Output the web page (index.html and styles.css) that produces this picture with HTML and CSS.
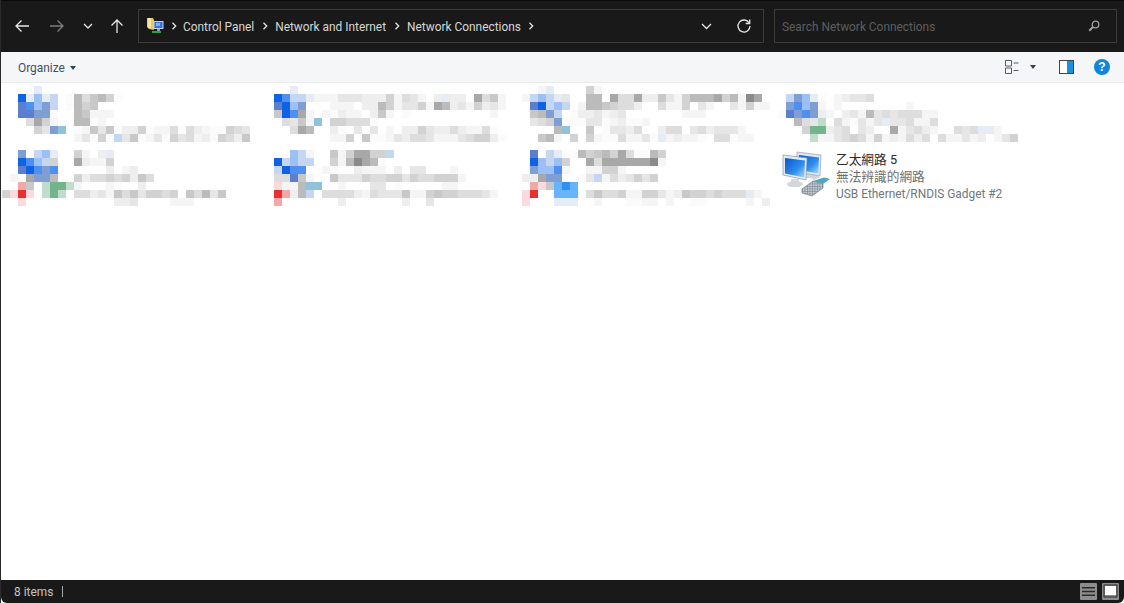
FILE: index.html
```html
<!DOCTYPE html>
<html lang="en">
<head>
<meta charset="utf-8">
<title>Network Connections</title>
<link rel="stylesheet" href="styles.css">
</head>
<body>
<div class="window">
  <header class="titlebar">
    <nav class="nav">
      <button class="nav-btn back" aria-label="Back"><svg width="16" height="14" viewBox="0 0 16 14"><path d="M15 7H2M7.500 1.500 2 7l5.500 5.500" class="line"/></svg></button>
      <button class="nav-btn forward" aria-label="Forward"><svg width="16" height="14" viewBox="0 0 16 14"><path d="M1 7h13M8.500 1.500 14 7l-5.500 5.500" class="line dim"/></svg></button>
      <button class="nav-btn recent" aria-label="Recent"><svg width="10" height="6" viewBox="0 0 10 6"><path d="M1 1l4 4 4-4" class="line"/></svg></button>
      <button class="nav-btn up" aria-label="Up"><svg width="14" height="16" viewBox="0 0 14 16"><path d="M7 15V2M1.500 7.500 7 2l5.500 5.500" class="line"/></svg></button>
    </nav>
    <div class="address">
      <svg class="cp-icon" width="17" height="16" viewBox="0 0 17 16">
        <path d="M0 0h6l1 2v10l-5-1-2-2z" fill="#e8c860"/>
        <path d="M1 0h3v10H1z" fill="#f6e6a0"/>
        <rect x="7" y="3.500" width="9" height="7" fill="#3f6fd8" stroke="#c0d0ee"/>
        <rect x="9" y="5" width="4" height="3" fill="#7fb0f0"/>
        <rect x="10" y="11" width="3" height="2" fill="#99a"/>
        <path d="M5 13h9v2H5z" fill="#2fa050"/>
      </svg>
      <span class="crumb-sep first"><svg width="6" height="8" viewBox="0 0 6 8"><path d="M1.500 .8 4.700 4 1.500 7.200" class="line"/></svg></span>
      <span class="crumb">Control Panel</span>
      <span class="crumb-sep"><svg width="6" height="8" viewBox="0 0 6 8"><path d="M1.500 .8 4.700 4 1.500 7.200" class="line"/></svg></span>
      <span class="crumb">Network and Internet</span>
      <span class="crumb-sep"><svg width="6" height="8" viewBox="0 0 6 8"><path d="M1.500 .8 4.700 4 1.500 7.200" class="line"/></svg></span>
      <span class="crumb">Network Connections</span>
      <span class="crumb-sep"><svg width="6" height="8" viewBox="0 0 6 8"><path d="M1.500 .8 4.700 4 1.500 7.200" class="line"/></svg></span>
      <span class="spacer"></span>
      <svg class="addr-down" width="11" height="7" viewBox="0 0 11 7"><path d="M1 1l4.500 4.500L10 1" class="line"/></svg>
      <svg class="refresh" width="16" height="16" viewBox="0 0 16 16"><path d="M13.200 5A6 6 0 1 0 14 8" class="line"/><path d="M13.700 1.500v4h-4" class="line"/></svg>
    </div>
    <div class="search">
      <span class="search-text">Search Network Connections</span>
      <svg width="12" height="12" viewBox="0 0 12 12"><circle cx="7.500" cy="4.500" r="3.300" class="line dimmer"/><path d="M5 7 1.200 10.800" class="line dimmer thick"/></svg>
    </div>
  </header>

  <div class="toolbar">
    <button class="organize">Organize<span class="caret"></span></button>
    <span class="spacer"></span>
    <svg class="views" width="14" height="14" viewBox="0 0 14 14"><path d="M.5 .5h6v5.500h-6zM.5 8h6v5.500h-6zM8.500 3h5M8.500 10.500h5" fill="none" stroke="#52606e"/></svg>
    <span class="caret views-caret"></span>
    <svg class="pane" width="15" height="14" viewBox="0 0 15 14"><rect x=".5" y=".5" width="14" height="13" fill="#fff" stroke="#3c4652"/><rect x="8" y="1" width="6" height="12" fill="#1b8fe0"/></svg>
    <span class="help">?</span>
  </div>

  <main class="content">
    <svg class="mosaic" data-cell="0" width="256" height="64"></svg>
    <svg class="mosaic" data-cell="1" width="256" height="64"></svg>
    <svg class="mosaic" data-cell="2" width="256" height="64"></svg>
    <svg class="mosaic" data-cell="3" width="256" height="64"></svg>
    <svg class="mosaic" data-cell="4" width="256" height="64"></svg>
    <svg class="mosaic" data-cell="5" width="256" height="64"></svg>
    <svg class="mosaic" data-cell="6" width="256" height="64"></svg>
    <div class="item">
      <svg class="net-icon" width="50" height="48" viewBox="0 0 50 48">
        <defs>
          <linearGradient id="scr" x1="0" y1="0" x2="1" y2="1">
            <stop offset="0" stop-color="#0b55d0"/>
            <stop offset=".6" stop-color="#2f8eec"/>
            <stop offset="1" stop-color="#a8dcfa"/>
          </linearGradient>
          <pattern id="mesh" width="2.500" height="2.500" patternUnits="userSpaceOnUse">
            <rect width="2.500" height="2.500" fill="#c2c9ce"/>
            <path d="M0 0h2.500M0 0v2.500" stroke="#66727c" stroke-width=".8"/>
          </pattern>
        </defs>
        <path d="M15 22l3 2v3h10l4 2 6-3-6-3z" fill="#cfd6dc"/>
        <path d="M15 1l24 3-1 21-23-4z" fill="#dfe7ee" stroke="#90a0b0" stroke-width=".7"/>
        <path d="M17 4l20 2.500-.7 16L17 19z" fill="url(#scr)"/>
        <path d="M9 28h8v3l4 2-4 3H8l-3-2 4-2z" fill="#d4dade"/>
        <ellipse cx="13" cy="33" rx="8" ry="3" fill="#d2d7db"/>
        <path d="M1 4l24 3-1 22L1 24z" fill="#e4ebf1" stroke="#8496a8" stroke-width=".7"/>
        <path d="M3 7l20 2.500-.8 17L3 22.500z" fill="url(#scr)"/>
        <path d="M20 38l11-8 10 3v4l-11 8-10-3z" fill="url(#mesh)" stroke="#77838c" stroke-width=".7"/>
        <path d="M31 30l11-3.500 6 1.500-7 5z" fill="#4fa6c2"/>
      </svg>
      <div class="item-text">
        <div class="item-name">乙太網路 5</div>
        <div class="item-status">無法辨識的網路</div>
        <div class="item-device">USB Ethernet/RNDIS Gadget #2</div>
      </div>
    </div>
  </main>

  <footer class="statusbar">
    <span class="count">8 items</span>
    <span class="status-sep"></span>
    <span class="spacer"></span>
    <svg class="status-icon" width="17" height="17" viewBox="0 0 17 17"><rect width="17" height="17" rx="1" fill="#8d8d8d"/><path d="M2 4h13v1.500H2zM2 7.700h13v1.500H2zM2 11.400h13v1.500H2z" fill="#2a2a2a"/></svg>
    <svg class="status-icon" width="17" height="17" viewBox="0 0 17 17"><rect width="17" height="17" rx="1" fill="#8d8d8d"/><rect x="3" y="3" width="11" height="9" fill="#fff"/><rect x="2" y="2" width="13" height="12" fill="none" stroke="#2a2a2a"/></svg>
  </footer>
</div>
<script src="mosaic.js"></script>
</body>
</html>
```

FILE: styles.css
```css
* { box-sizing: border-box; }
html, body { margin: 0; height: 100%; background: #fff; overflow: hidden; }
body { font: 11.9px Roboto, "Noto Sans CJK TC", sans-serif; }
.window {
  height: 603px;
  display: flex;
  flex-direction: column;
  border-left: 1px solid #2a2a2a;
  background: #fff;
}
.spacer { flex: 1; }
.line { fill: none; stroke: #e6e6e6; stroke-width: 1.300; }
.line.dim { stroke: #7d7d7d; }
.line.dimmer { stroke: #a0a0a0; }
.line.thick { stroke-width: 2; }

.titlebar {
  height: 52px;
  flex: none;
  background: #191919;
  display: flex;
  align-items: flex-start;
  padding-top: 8px;
  padding-right: 7px;
  border-top: 1px solid #0a0a0a;
}
.nav { width: 137px; height: 33px; flex: none; display: flex; align-items: center; }
.nav-btn { background: none; border: 0; padding: 0; display: flex; align-items: center; justify-content: center; height: 33px; }
.nav-btn.back { width: 42px; }
.nav-btn.forward { width: 27px; }
.nav-btn.recent { width: 35px; }
.nav-btn.up { width: 24px; }

.address, .search {
  height: 34px;
  border: 1px solid #3c3c3c;
  background: #191919;
  display: flex;
  align-items: center;
}
.address { width: 626px; flex: none; padding-left: 8px; color: #d6d6d6; }
.cp-icon { flex: none; }
.crumb { white-space: nowrap; line-height: 16px; padding-top: 2px; }
.crumb-sep { width: 21px; display: flex; justify-content: center; flex: none; }
.crumb-sep.first { width: 19px; }
.addr-down { margin-right: 24px; }
.refresh { margin-right: 11px; }
.search { flex: 1; margin-left: 10px; padding: 0 16px 0 7px; justify-content: space-between; color: #5e5e5e; }
.search-text { padding-top: 2px; }

.toolbar {
  height: 31px;
  flex: none;
  background: #f5f6f7;
  border-bottom: 1px solid #e9eaeb;
  display: flex;
  align-items: center;
  padding: 0 14px 0 17px;
}
.organize { background: none; border: 0; padding: 2px 0 0; font: inherit; color: #3d5068; display: flex; align-items: center; }
.caret {
  display: inline-block;
  width: 0;
  height: 0;
  border-left: 3.500px solid transparent;
  border-right: 3.500px solid transparent;
  border-top: 4px solid #2f4258;
  margin-left: 5px;
}
.views { margin-right: 11px; }
.views-caret { margin: 0 23px 0 0; }
.pane { margin-right: 20px; }
.help {
  width: 16px;
  height: 16px;
  border-radius: 50%;
  background: #0e86dc;
  color: #fff;
  font: bold 12px/16px "Liberation Sans", sans-serif;
  text-align: center;
}

.content {
  flex: 1;
  display: grid;
  grid-template-columns: repeat(4, 256px);
  grid-auto-rows: 56px;
  align-content: start;
  padding: 3px 0 0 1px;
}
.mosaic { display: block; overflow: visible; filter: blur(.5px); }
.item { display: flex; padding: 8px 0 0 12px; }
.net-icon { flex: none; margin-top: 1px; }
.item-text { margin: 0 0 0 4px; padding-top: 2px; }
.item-name { font-size: 12.7px; color: #2a2a2a; line-height: 16.500px; }
.item-status { font-size: 12.7px; color: #6e6e6e; line-height: 16.500px; }
.item-device { color: #6d7780; line-height: 16.500px; margin-top: 1px; white-space: nowrap; }

.statusbar {
  height: 23px;
  flex: none;
  background: #191919;
  border-bottom-left-radius: 6px;
  border-bottom-right-radius: 6px;
  display: flex;
  align-items: center;
  padding: 0 5px 0 13px;
  color: #c4c4c4;
}
.status-sep { width: 1px; height: 11px; background: #a8a8a8; margin-left: 9px; }
.status-icon { margin-left: 5px; }
```

FILE: mosaic.js
```js
var PALETTE = {
  0: '#fbfbfb', 1: '#f5f5f5', 2: '#eeeeee', 3: '#e6e6e6', 4: '#dddddd',
  5: '#d2d2d2', 6: '#c8c8c8', 7: '#bbbbbb', 8: '#a8a8a8', 9: '#8a8a8a',
  B: '#0f62e6', C: '#4f8ff0', D: '#9cc0f5', E: '#c4d6f0', F: '#e6ecf5',
  G: '#5a7fcf', H: '#7f9fd4', R: '#e83030', S: '#f2a8a8', T: '#fadadd',
  U: '#72b48c', V: '#c0dccb', W: '#66b4fa', X: '#2e90f8', Y: '#92c2da'
};

/* Pixelated rows, one character per 8px block, for the seven redacted items. */
var CELLS = [
  [
    '....F',
    '..BFDFE.0746750',
    '..GCDHE.0756',
    '..GGHH0..76111',
    '...4851..7701',
    '....53HY.0163602250114042100543',
    '.........13050E3601305341205426',
    ''
  ],
  [
    '....F',
    '..BCEEF11133322251431.2F22.8461',
    '..GBDH...111.227513351872315231',
    '..6BC81.10211.261.0..........1',
    '...4361Y.554440',
    '....487..20.3.3.1.225322421140',
    '.........115.600132443111345520',
    ''
  ],
  [
    '...1F....51',
    '.1EDEF3..77.8448226315777857198',
    '..GBEDE.17765442..4115.31..31511',
    '..67HE.0223123.......111',
    '..345H00033012001',
    '.....7Y..6.03324..244.3423331',
    '...671.5.510041130F12110.44011',
    ''
  ],
  [
    '',
    '..EHDF0.12334',
    '..HCDH1.1........1',
    '.0GHCH21.231734344411',
    '...743V.410313F334114',
    '....5UU234.32..813421..434FF1',
    '.....V11345415121424.411312.135',
    ''
  ],
  [
    '',
    '..H.EDF..51.2F',
    '..BCDE5..82115',
    '..GBCHC......2.12',
    '.1.8HH7..5244545264',
    '..S6.VUUV1...10..2',
    '5TRT.VUV.4423164635545.64736',
    '..T...........223....111'
  ],
  [
    '',
    '....DE1..6158855E',
    '..BEDEE..5179870',
    '..EBCC..10..2111.2.33...1',
    '..44G61..63335445535445551',
    '..T117YY..1...33.0.....11',
    '..RS27E.4444214333611565544431',
    '..S.......2.......2..3'
  ],
  [
    '',
    '..G.EF0075675840075',
    '..BDED5..8488888891',
    '..HDDC1..11551',
    '.228HH..03E1423535',
    '..ST6WXW',
    '.TR..WWW046445115531265545444F1',
    '.T...FFF..1...0011.1..00.....1.2'
  ]
];

document.querySelectorAll('.mosaic').forEach(function (svg) {
  var rows = CELLS[Number(svg.dataset.cell)];
  rows.forEach(function (row, y) {
    row.split('').forEach(function (ch, x) {
      var fill = PALETTE[ch];
      if (!fill) return;
      var r = document.createElementNS('http://www.w3.org/2000/svg', 'rect');
      r.setAttribute('x', x * 8);
      r.setAttribute('y', y * 8);
      r.setAttribute('width', 8);
      r.setAttribute('height', 8);
      r.setAttribute('fill', fill);
      svg.appendChild(r);
    });
  });
});
```
